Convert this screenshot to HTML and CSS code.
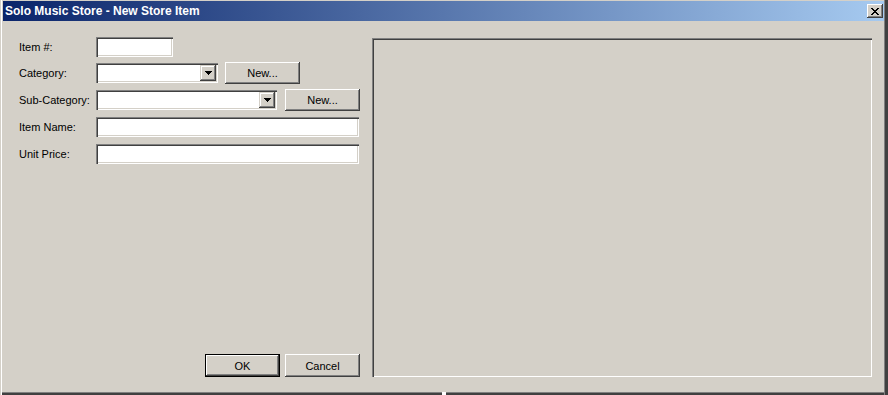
FILE: index.html
```html
<!DOCTYPE html>
<html lang="en">
<head>
  <meta charset="UTF-8">
  <title>Solo Music Store - New Store Item</title>
  <link rel="stylesheet" href="styles.css">
</head>
<body>
  <div class="window">
    <div class="titlebar">
      <span class="title">Solo Music Store - New Store Item</span>
      <button class="close" type="button">
        <svg width="8" height="7" viewBox="0 0 8 7" shape-rendering="crispEdges"><path d="M0 0h2v1H0z M6 0h2v1H6z M1 1h2v1H1z M5 1h2v1H5z M2 2h4v1H2z M3 3h2v1H3z M2 4h4v1H2z M1 5h2v1H1z M5 5h2v1H5z M0 6h2v1H0z M6 6h2v1H6z" fill="#000"/></svg>
      </button>
    </div>

    <div class="client">
      <form class="form">
        <div class="row">
          <label>Item #:</label>
          <input class="field w-item" type="text">
        </div>
        <div class="row">
          <label>Category:</label>
          <div class="field combo w-cat">
            <span class="drop"><svg width="7" height="4" viewBox="0 0 7 4" shape-rendering="crispEdges"><path d="M0 0h7v1H0z M1 1h5v1H1z M2 2h3v1H2z M3 3h1v1H3z" fill="#000"/></svg></span>
          </div>
          <button class="btn btn-new" type="button">New...</button>
        </div>
        <div class="row">
          <label>Sub-Category:</label>
          <div class="field combo w-sub">
            <span class="drop"><svg width="7" height="4" viewBox="0 0 7 4" shape-rendering="crispEdges"><path d="M0 0h7v1H0z M1 1h5v1H1z M2 2h3v1H2z M3 3h1v1H3z" fill="#000"/></svg></span>
          </div>
          <button class="btn btn-new" type="button">New...</button>
        </div>
        <div class="row">
          <label>Item Name:</label>
          <input class="field w-wide" type="text">
        </div>
        <div class="row">
          <label>Unit Price:</label>
          <input class="field w-wide" type="text">
        </div>

        <div class="actions">
          <button class="btn default" type="button">OK</button>
          <button class="btn" type="button">Cancel</button>
        </div>
      </form>

      <div class="panel"></div>
    </div>

    <span class="grip"></span>
  </div>
</body>
</html>
```

FILE: styles.css
```css
body { margin: 0; font-family: "Liberation Sans", Arial, sans-serif; font-size: 11px; color: #000; }

.window {
  position: relative;
  width: 888px; height: 395px;
  box-sizing: border-box;
  padding: 1px 4px 3px 3px;
  display: flex; flex-direction: column;
  background: #d4d0c8;
  box-shadow: inset 1px 0 #d4d0c8, inset 2px 0 #fff,
              inset -3px 0 #404040, inset -4px 0 #808080,
              inset 0 -2px #404040, inset 0 -3px #808080;
}

.titlebar {
  height: 20px; flex: none;
  display: flex; align-items: center;
  padding-left: 2px;
  background: linear-gradient(to right, #0a246a, #a6caf0);
}
.title { color: #fff; font-weight: bold; font-size: 12px; }
.close {
  margin-left: auto; margin-right: 1px;
  width: 16px; height: 14px; padding: 0; border: 0;
  display: flex; align-items: center; justify-content: center;
  background: #d4d0c8;
  box-shadow: inset -1px -1px #404040, inset 1px 1px #fff, inset -2px -2px #808080;
}

.client { flex: 1; display: flex; gap: 12px; padding: 16px 12px 15px 16px; }

.form { width: 341px; display: flex; flex-direction: column; }
.row { display: flex; align-items: flex-start; height: 27px; }
.row:first-child { height: 26px; }
.row label { width: 77px; line-height: 20px; }

.field {
  box-sizing: border-box; height: 20px; margin: 0; padding: 0 3px;
  border: 0; background: #fff; font: inherit;
  box-shadow: inset 1px 1px #808080, inset 2px 2px #404040, inset -1px -1px #fff, inset -2px -2px #d4d0c8;
}
.w-item { width: 77px; }
.w-wide { width: 263px; }
.w-cat { width: 122px; }
.w-sub { width: 181px; }

.combo { display: flex; justify-content: flex-end; padding: 2px; }
.drop {
  width: 16px; height: 16px; box-sizing: border-box;
  display: flex; align-items: center; justify-content: center;
  background: #d4d0c8;
  box-shadow: inset -1px -1px #404040, inset 1px 1px #d4d0c8, inset -2px -2px #808080, inset 2px 2px #fff;
}

.btn {
  width: 75px; height: 22px; padding: 0; border: 0;
  background: #d4d0c8; font: inherit; color: #000;
  box-shadow: inset -1px -1px #404040, inset 1px 1px #fff, inset -2px -2px #808080, inset 2px 2px #d4d0c8;
}
.btn-new { margin-top: -1px; margin-left: 7px; }
.row:nth-child(3) .btn-new { margin-left: 8px; }

.actions { margin-top: auto; display: flex; justify-content: flex-end; gap: 5px; }
.actions .btn { height: 23px; }
.btn.default {
  box-shadow: inset 0 0 0 1px #000, inset -2px -2px #404040, inset 2px 2px #fff, inset -3px -3px #808080;
}

.panel {
  flex: 1; margin-top: 1px;
  box-shadow: inset 1px 1px #808080, inset 2px 2px #404040, inset -1px -1px #fff, inset -2px -2px #d4d0c8;
}

.grip { position: absolute; left: 442px; bottom: 0; width: 4px; height: 3px; background: #fff; }
```
